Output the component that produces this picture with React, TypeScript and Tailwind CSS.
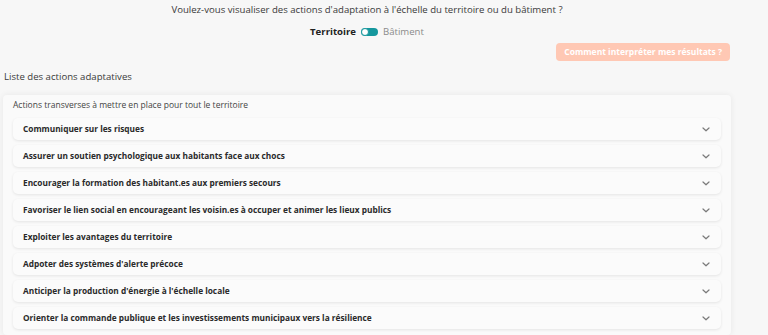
import React from 'react'

const actions = [
  'Communiquer sur les risques',
  'Assurer un soutien psychologique aux habitants face aux chocs',
  'Encourager la formation des habitant.es aux premiers secours',
  'Favoriser le lien social en encourageant les voisin.es à occuper et animer les lieux publics',
  'Exploiter les avantages du territoire',
  "Adpoter des systèmes d'alerte précoce",
  "Anticiper la production d'énergie à l'échelle locale",
  'Orienter la commande publique et les investissements municipaux vers la résilience',
]

const Chevron = () => (
  <svg width="8" height="5" viewBox="0 0 8 5" fill="none" className="shrink-0">
    <path d="M1 1l3 2.8L7 1" stroke="#7a7a7a" strokeWidth="1.2" strokeLinecap="round" strokeLinejoin="round" />
  </svg>
)

const App = () => {
  return (
    <div
      className="min-h-[335px] w-full bg-[#f7f7f7] pr-[34px] text-[#333]"
      style={{ fontFamily: '"Open Sans", "Liberation Sans", sans-serif' }}
    >
      <div className="flex flex-col items-center pt-[3px]">
        <p className="text-[9.6px] leading-[14px] text-[#3a3a3a]">
          Voulez-vous visualiser des actions d'adaptation à l'échelle du territoire ou du bâtiment ?
        </p>
        <div className="mt-[8px] flex items-center gap-[5px] text-[9.6px] leading-[14px]">
          <span className="font-bold text-[#222]">Territoire</span>
          <span className="relative inline-block h-[8px] w-[17px] rounded-full bg-[#15979d]">
            <span className="absolute left-0 top-0 h-[8px] w-[8px] rounded-full border-[1.5px] border-[#15979d] bg-white" />
          </span>
          <span className="text-[#8a8a8a]">Bâtiment</span>
        </div>
      </div>

      <div className="flex justify-end pr-[4px] pt-[4px]">
        <button className="h-[18px] rounded-[4px] bg-[#ffc8b4] px-[8px] text-[8.5px] font-bold text-white">
          Comment interpréter mes résultats ?
        </button>
      </div>

      <p className="mt-[9px] pl-[4px] text-[9.6px] leading-[14px] text-[#3a3a3a]">Liste des actions adaptatives</p>

      <div className="ml-[3px] mr-[3px] mt-[11px] rounded-[4px] bg-[#fafafa] px-[10px] pb-[6px] pt-[4px] shadow-[0_0_6px_rgba(0,0,0,0.07)]">
        <p className="text-[8.5px] leading-[12px] text-[#444]">Actions transverses à mettre en place pour tout le territoire</p>
        <div className="mt-[7px] flex flex-col gap-[5px]">
          {actions.map((a) => (
            <div
              key={a}
              className="flex h-[22px] items-center justify-between rounded-[5px] bg-[#fbfbfb] pl-[10px] pr-[11px] shadow-[0_1px_3px_rgba(0,0,0,0.09)]"
            >
              <span className="text-[8.3px] font-bold text-[#2a2a2a]">{a}</span>
              <Chevron />
            </div>
          ))}
        </div>
      </div>
    </div>
  )
}

export default App
